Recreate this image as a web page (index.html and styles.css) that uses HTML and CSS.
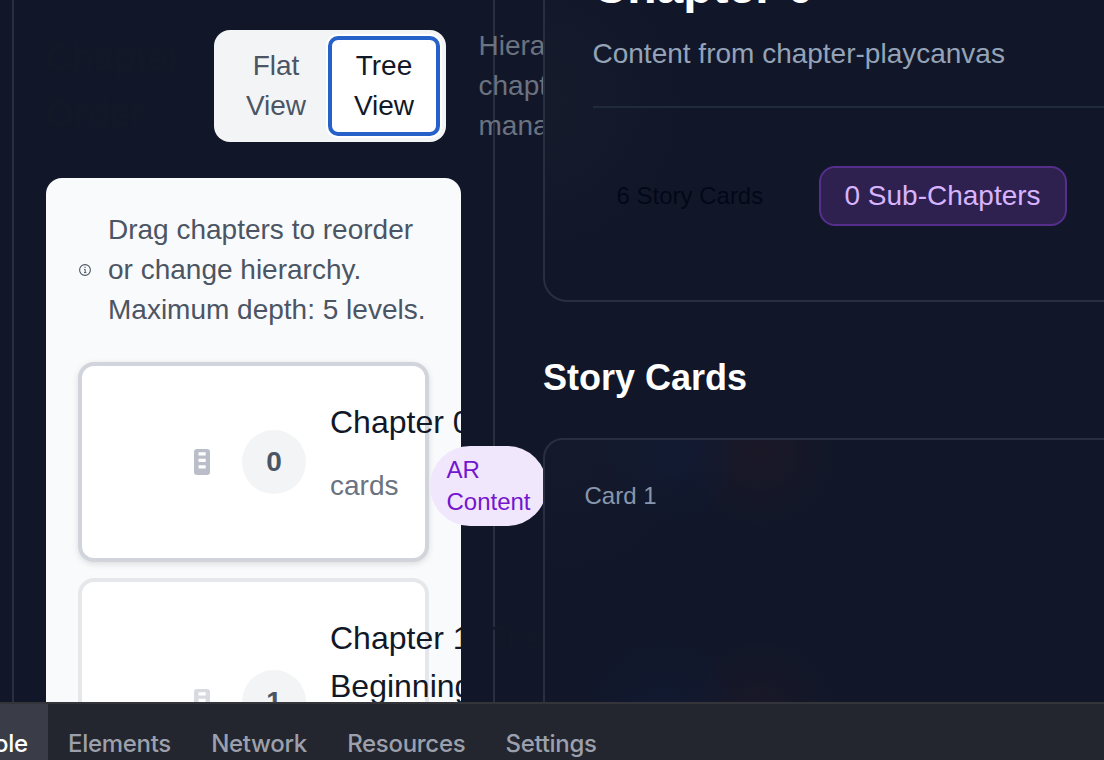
FILE: index.html
```html
<!DOCTYPE html>
<html lang="en">
<head>
<meta charset="utf-8">
<title>Chapter Order</title>
<link rel="stylesheet" href="styles.css">
</head>
<body>
<div class="app">
  <div class="workspace">
    <div class="side-column">
      <aside class="sidebar">
        <header class="side-header">
          <h2 class="side-title">Chapter Order</h2>
          <div class="toggle">
            <button class="toggle-btn">Flat<br>View</button>
            <button class="toggle-btn active">Tree<br>View</button>
          </div>
          <p class="side-desc">Hierarchical<br>chapter<br>management</p>
        </header>
        <section class="tree">
          <div class="hint">
            <svg class="hint-icon" viewBox="0 0 14 14" fill="none" stroke="currentColor">
              <circle cx="7" cy="7" r="5.4" stroke-width="1.1"/>
              <path d="M6.1 6.4H7.2V9.5M6 9.6H8.4" stroke-width="1"/>
              <path d="M6.5 4.4H7.6" stroke-width="1.1"/>
            </svg>
            <p>Drag chapters to reorder<br>or change hierarchy.<br>Maximum depth: 5 levels.</p>
          </div>
          <article class="node selected">
            <svg class="grip" viewBox="0 0 16 26"><path fill-rule="evenodd" fill="currentColor" d="M3 0H13Q16 0 16 3V23Q16 26 13 26H3Q0 26 0 23V3Q0 0 3 0ZM4.5 3.2V6.5H11.7V3.2ZM4.5 9.7V13H11.7V9.7ZM4.5 16.2V19.5H11.7V16.2Z"/></svg>
            <span class="number">0</span>
            <div class="node-body">
              <h3 class="node-title">Chapter 0</h3>
              <div class="node-meta"><span>cards</span><span class="ar">AR<br>Content</span></div>
            </div>
          </article>
          <article class="node">
            <svg class="grip" viewBox="0 0 16 26"><path fill-rule="evenodd" fill="currentColor" d="M3 0H13Q16 0 16 3V23Q16 26 13 26H3Q0 26 0 23V3Q0 0 3 0ZM4.5 3.2V6.5H11.7V3.2ZM4.5 9.7V13H11.7V9.7ZM4.5 16.2V19.5H11.7V16.2Z"/></svg>
            <span class="number">1</span>
            <div class="node-body">
              <h3 class="node-title">Chapter 1: The<br>Beginning</h3>
              <div class="node-meta"><span>cards</span></div>
            </div>
          </article>
        </section>
      </aside>
    </div>
    <main class="main">
      <section class="chapter">
        <h1 class="chapter-title">Chapter 0</h1>
        <p class="chapter-sub">Content from chapter-playcanvas</p>
        <div class="stats">
          <span class="stat-cards">6 Story Cards</span>
          <span class="stat-sub">0 Sub-Chapters</span>
        </div>
      </section>
      <h2 class="cards-title">Story Cards</h2>
      <section class="story-card">Card 1</section>
    </main>
  </div>
  <nav class="devtools">
    <span class="tab current">Console</span>
    <span class="tab">Elements</span>
    <span class="tab">Network</span>
    <span class="tab">Resources</span>
    <span class="tab">Settings</span>
  </nav>
</div>
</body>
</html>
```
FILE: styles.css
```css
* { box-sizing: border-box; margin: 0; }

body {
  background: #111729;
  font: 28px/40px "Liberation Sans", Arial, sans-serif;
}

.app {
  display: flex;
  flex-direction: column;
  width: 1104px;
  height: 760px;
  overflow: hidden;
}

.workspace {
  display: flex;
  height: 702px;
  flex: none;
  overflow: hidden;
}

.side-column {
  flex: none;
  width: 544px;
  padding-left: 12px;
  overflow: hidden;
}

.sidebar {
  width: 483px;
  height: 702px;
  padding: 30px 32px 0;
  border: solid #292f3f;
  border-width: 0 2px;
}

.side-header {
  display: flex;
  align-items: center;
  gap: 32px;
  width: 600px;
  height: 112px;
  margin-bottom: 36px;
}

.side-title {
  flex: none;
  width: 136px;
  color: #111827;
  font-size: 36px;
  line-height: 56px;
}

.toggle {
  display: flex;
  flex: none;
  width: 232px;
  height: 112px;
  padding: 8px;
  border-radius: 16px;
  background: #f3f4f6;
}

.toggle-btn {
  width: 108px;
  padding: 8px 0;
  border: 0;
  border-radius: 8px;
  background: transparent;
  color: #4b5563;
  font: inherit;
}

.toggle-btn.active {
  background: #fff;
  color: #111827;
  outline: 4px solid #2660c9;
  outline-offset: -2px;
  box-shadow: 0 0 0 4px #fff;
}

.side-desc { padding-left: 0.5px; color: #6b7280; }

.tree {
  width: 415px;
  height: 620px;
  padding: 32px;
  border-radius: 16px;
  background: #f9fafc;
}

.hint {
  display: flex;
  align-items: center;
  gap: 16px;
  margin-bottom: 32px;
  color: #4b5563;
  white-space: nowrap;
}

.hint-icon { flex: none; width: 14px; height: 14px; }

.node {
  display: flex;
  align-items: center;
  height: 248px;
  margin-bottom: 16px;
  padding-left: 112px;
  border: 4px solid #e5e7eb;
  border-radius: 16px;
  background: #fff;
}

.node.selected {
  height: 200px;
  border-color: #d1d5db;
  box-shadow: 0 2px 6px rgba(0, 0, 0, 0.12);
}

.grip {
  flex: none;
  width: 16px;
  height: 26px;
  margin-right: 32px;
  color: #d8dae0;
}

.selected .grip { color: #b9bec8; }

.number {
  flex: none;
  width: 64px;
  margin-right: 24px;
  border-radius: 50%;
  background: #f3f4f6;
  color: #4b5563;
  font-weight: 700;
  line-height: 64px;
  text-align: center;
}

.node-body { flex: none; white-space: nowrap; }

.node-title {
  color: #111827;
  font-size: 32px;
  font-weight: 400;
  line-height: 48px;
}

.node-meta {
  display: flex;
  align-items: center;
  gap: 32px;
  height: 80px;
  color: #6b7280;
}

.ar {
  padding: 8px 16px;
  border-radius: 40px;
  background: #f1e7fd;
  color: #7415d0;
  font-size: 24px;
  line-height: 32px;
}

.main { flex: none; width: 620px; margin-left: -1px; position: relative; }

.chapter {
  height: 352px;
  margin-top: -50px;
  padding: 7px 47.5px 0;
  border: 2px solid #292f3f;
  border-radius: 24px;
  background: radial-gradient(circle at -10px 150px, #161b2c, transparent 150px);
}

.chapter-title {
  color: #fff;
  font-size: 48px;
  line-height: 56px;
}

.chapter-sub {
  height: 93px;
  padding-top: 19px;
  border-bottom: 2px solid #1f2a3b;
  color: #94a3b8;
}

.stats {
  display: flex;
  align-items: center;
  gap: 32px;
  margin-top: 58px;
}

.stat-cards {
  width: 194px;
  padding-left: 24px;
  color: #020817;
  font-size: 24px;
  white-space: nowrap;
}

.stat-sub {
  width: 248px;
  padding: 8px 24px;
  border: 2px solid #552f8b;
  border-radius: 16px;
  background: #2e2150;
  color: #d8b4fe;
  white-space: nowrap;
}

.cards-title {
  margin: 48px 0 32px;
  color: #fff;
  font-size: 36px;
  line-height: 56px;
}

.story-card {
  height: 300px;
  padding: 36px 39.5px;
  border: 2px solid #292f3f;
  border-radius: 20px;
  background:
    radial-gradient(circle at 130px 8px, rgba(20, 40, 100, 0.16), transparent 75px),
    radial-gradient(circle at 215px 12px, rgba(70, 25, 25, 0.18), transparent 75px),
    radial-gradient(circle at 120px 275px, rgba(20, 40, 100, 0.14), transparent 80px),
    radial-gradient(circle at 215px 275px, rgba(70, 25, 25, 0.16), transparent 75px),
    radial-gradient(circle at 20px 10px, #141a2b, transparent 130px);
  color: #8896ad;
  font-size: 24px;
}

.devtools {
  display: flex;
  flex: none;
  height: 82px;
  border-top: 2px solid #33353a;
  background: #23262e;
  color: #9ca0ac;
  font: 500 24px/80px Inter, sans-serif;
  letter-spacing: -0.3px;
}

.tab { padding: 0 20.2px 0 20px; }

.tab.current {
  display: flex;
  justify-content: flex-end;
  width: 48px;
  overflow: hidden;
  background: #3a3d47;
  color: #fff;
}
```
